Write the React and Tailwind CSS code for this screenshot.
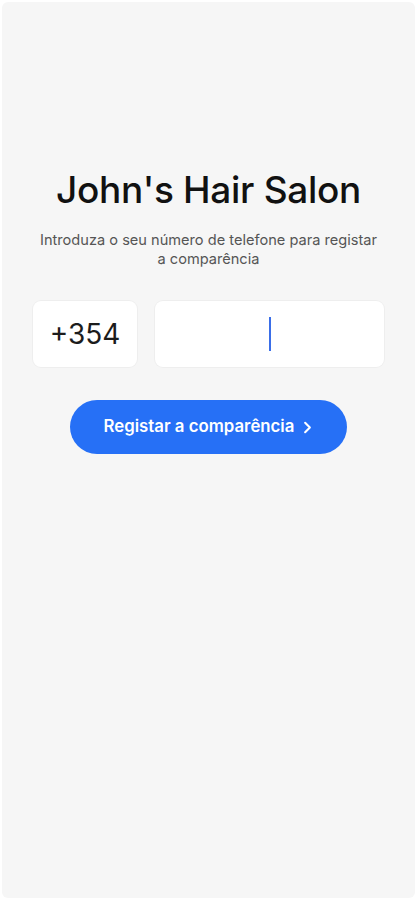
import { ChevronRight } from 'lucide-react';

export default function App() {
  return (
    <div className="h-[900px] w-full bg-white p-[2px]" style={{ fontFamily: 'Inter, "Noto Sans", sans-serif' }}>
      <div className="flex h-full flex-col items-center rounded-[6px] bg-[#f6f6f6] pt-[164px]">
        <h1 className="text-[37px] leading-[48px] font-medium tracking-[-0.3px] text-[#111]">John's Hair Salon</h1>

        <p className="mt-[17px] w-[346px] text-center text-[14.6px] leading-[19px] text-[#555]">
          Introduza o seu número de telefone para registar a comparência
        </p>

        <div className="mt-[32px] flex w-[351px] gap-[18px]">
          <div className="flex h-[66px] w-[104px] items-center justify-center rounded-[8px] bg-white text-[28px] text-[#1c1c1c] shadow-[0_0_0_1px_rgba(0,0,0,0.03)]">
            +354
          </div>
          <div className="flex h-[66px] flex-1 items-center justify-center rounded-[8px] bg-white shadow-[0_0_0_1px_rgba(0,0,0,0.03)]">
            <span className="h-[34px] w-[2px] bg-[#3a6ee8]" />
          </div>
        </div>

        <button className="mt-[33px] flex h-[54px] w-[277px] items-center justify-center gap-[4px] rounded-full bg-[#2670f6] pl-[4px] text-[16.8px] font-semibold text-white">
          Registar a comparência
          <ChevronRight size={19} strokeWidth={2.6} />
        </button>
      </div>
    </div>
  );
}
